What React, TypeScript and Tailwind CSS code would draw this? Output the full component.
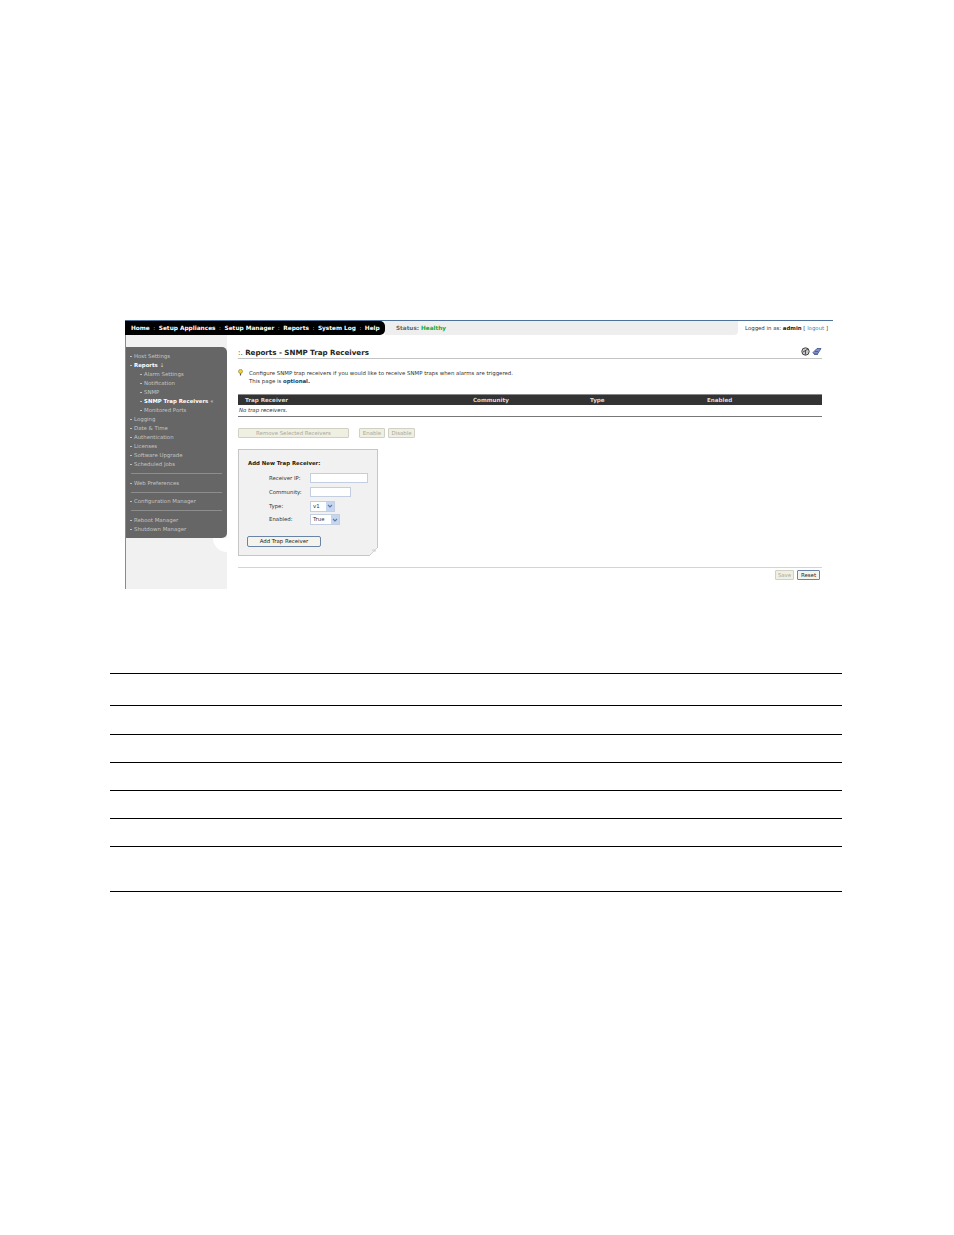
const mainNav = ["Home", "Setup Appliances", "Setup Manager", "Reports", "System Log", "Help"];

function SideItem({ label, bold, sub, arrow }: { label: string; bold?: boolean; sub?: boolean; arrow?: string }) {
  return (
    <div className={`flex h-[9px] items-center whitespace-nowrap ${sub ? "pl-[14px]" : "pl-[4px]"} ${bold ? "font-bold text-white" : "text-[#c4c4c4]"}`}>
      <span className="mr-[2px] h-[1px] w-[2px] bg-[#bdbdbd]" />
      {label}
      {arrow && <span className="ml-[2px] font-normal text-[#d8d8d8]">{arrow}</span>}
    </div>
  );
}

function Divider() {
  return <div className="mx-[5px] mb-[4.67px] mt-[4px] h-px bg-[#8d8d8d]" />;
}

function Sidebar() {
  return (
    <div className="flex w-[102px] shrink-0 flex-col border-l border-[#8a8a8a] bg-[#f1f1f1] pt-[12px]">
      <div className="relative h-[191px] rounded-r-[5px] bg-[#666666] pt-[5px] text-[5.4px] leading-[9px]">
        <SideItem label="Host Settings" />
        <SideItem label="Reports" bold arrow="↓" />
        <SideItem label="Alarm Settings" sub />
        <SideItem label="Notification" sub />
        <SideItem label="SNMP" sub />
        <SideItem label="SNMP Trap Receivers" sub bold arrow="«" />
        <SideItem label="Monitored Ports" sub />
        <SideItem label="Logging" />
        <SideItem label="Date & Time" />
        <SideItem label="Authentication" />
        <SideItem label="Licenses" />
        <SideItem label="Software Upgrade" />
        <SideItem label="Scheduled Jobs" />
        <Divider />
        <SideItem label="Web Preferences" />
        <Divider />
        <SideItem label="Configuration Manager" />
        <Divider />
        <SideItem label="Reboot Manager" />
        <SideItem label="Shutdown Manager" />
        {/* white notch under the panel corner */}
        <div className="absolute right-0 top-full h-[14px] w-[14px] rounded-bl-[14px] bg-white" />
      </div>
    </div>
  );
}

function FormRow({ label, children, h }: { label: string; children: React.ReactNode; h: string }) {
  return (
    <div className={`flex items-center ${h}`}>
      <div className="w-[71px] pl-[30px] whitespace-nowrap">{label}</div>
      {children}
    </div>
  );
}

function FakeSelect({ value, width }: { value: string; width: string }) {
  return (
    <div className={`flex h-[11px] items-center justify-between border border-[#c3cfe0] bg-white pl-[2px] ${width}`}>
      <span>{value}</span>
      <span className="flex h-[9px] w-[8px] items-center justify-center bg-[#c6d6ef]">
        <svg width="6" height="4" viewBox="0 0 6 4"><path d="M1 1l2 2 2-2" fill="none" stroke="#5b78ad" strokeWidth="1.1" /></svg>
      </span>
    </div>
  );
}

function Screen() {
  return (
    <div className="ml-[125px] flex h-[269px] w-[708px] flex-col border-t border-[#4d7198] font-['DejaVu_Sans',sans-serif] text-[5.4px] text-[#333]">
      <div className="flex h-[14px] shrink-0 items-stretch">
        <div className="flex w-[260px] items-center rounded-r-[5px] bg-black pl-[6px] pt-[1px] text-[5.8px] font-bold text-white">
          {mainNav.map((n, i) => (
            <span key={n} className="flex items-center whitespace-nowrap">
              {i > 0 && <span className="mx-[3.5px] font-normal text-[#bbb]">:</span>}
              {n}
            </span>
          ))}
        </div>
        <div className="flex w-[353px] items-center rounded-br-[4px] bg-[#eeeeee] pl-[11px] pt-[1px] text-[5.7px] font-bold text-[#666]">
          Status:&nbsp;<span className="text-[#13a83c]">Healthy</span>
        </div>
        <div className="flex flex-1 items-center justify-end whitespace-nowrap pr-[5px] pt-[1px]">
          Logged in as:&nbsp;<b className="text-[#222]">admin</b>&nbsp;[&nbsp;<span className="text-[#3b87b8]">logout</span>&nbsp;]
        </div>
      </div>
      <div className="flex min-h-0 flex-1">
        <Sidebar />
        <div className="flex w-[595px] flex-col pl-[11px]">
          <div className="flex h-[24px] shrink-0 items-end justify-between border-b border-[#c4c4c4]">
            <div className="text-[7.1px] font-bold leading-[11px] text-[#222]"><span className="font-normal">:.</span> Reports - SNMP Trap Receivers</div>
            <div className="mb-[2px] flex gap-[2px]">
              <svg width="9" height="9" viewBox="0 0 9 9"><circle cx="4.5" cy="4.5" r="3.7" fill="#c9c9c9" stroke="#444" /><path d="M2 5l5-3M4.5 3.5v4" fill="none" stroke="#333" strokeWidth=".8" /></svg>
              <svg width="10" height="9" viewBox="0 0 10 9"><path d="M1 5.5L5 1.5h4L5.5 7H2z" fill="#7d90cc" stroke="#3a4c86" strokeWidth=".8" /><path d="M2 7.5h4M3 4.5h3" stroke="#3a4c86" strokeWidth=".7" /></svg>
            </div>
          </div>
          <div className="mt-[10px] flex h-[17px] shrink-0">
            <svg width="5" height="7" viewBox="0 0 5 7"><circle cx="2.5" cy="2.4" r="2" fill="#f3d33a" stroke="#8a7a10" strokeWidth=".6" /><path d="M2.5 4.5v2" stroke="#555" strokeWidth="1.2" /></svg>
            <div className="ml-[6px] pt-[1px] leading-[7.5px] whitespace-nowrap">
              Configure SNMP trap receivers if you would like to receive SNMP traps when alarms are triggered.<br />
              This page is <b className="text-[#123f70]">optional.</b>
            </div>
          </div>
          <div className="mt-[8px] grid h-[11px] shrink-0 grid-cols-[228px_117px_117px_1fr] items-center border-t border-[#888] bg-[#333333] pl-[7px] text-[5.6px] font-bold text-[#ddd]">
            <span>Trap Receiver</span><span>Community</span><span>Type</span><span>Enabled</span>
          </div>
          <div className="flex h-[12px] shrink-0 items-center border-b border-[#777] pl-[1px] italic">No trap receivers.</div>
          <div className="mt-[11px] flex h-[10px] shrink-0 text-[#a9a9a0]">
            <div className="flex w-[111px] items-center justify-center rounded-[1px] border border-[#d0d0c4] bg-[#efefe2]">Remove Selected Receivers</div>
            <div className="ml-[10px] flex w-[26px] items-center justify-center rounded-[1px] border border-[#d0d0c4] bg-[#efefe2]">Enable</div>
            <div className="ml-[3px] flex w-[27px] items-center justify-center rounded-[1px] border border-[#d0d0c4] bg-[#efefe2]">Disable</div>
          </div>
          <div className="relative mt-[11px] h-[107px] w-[140px] shrink-0 border border-[#c6c6c6] bg-[#f1f1f1] pt-[9px]">
            <div className="h-[11px] pl-[9px] font-bold text-[#222]">Add New Trap Receiver:</div>
            <div className="mt-[1px]">
              <FormRow label="Receiver IP:" h="h-[14px]"><div className="h-[10px] w-[58px] border border-[#c3cfe0] bg-white" /></FormRow>
              <FormRow label="Community:" h="h-[14px]"><div className="h-[10px] w-[41px] border border-[#c3cfe0] bg-white" /></FormRow>
              <FormRow label="Type:" h="h-[14px]"><FakeSelect value="v1" width="w-[25px]" /></FormRow>
              <FormRow label="Enabled:" h="h-[13px]"><FakeSelect value="True" width="w-[30px]" /></FormRow>
            </div>
            <div className="ml-[8px] mt-[10px] flex h-[11px] w-[74px] items-center justify-center rounded-[2px] border border-[#6a84a8] bg-[#f4f4ec] text-[#222]">Add Trap Receiver</div>
            {/* cut corner */}
            <svg className="absolute bottom-[-1px] right-[-1px]" width="9" height="9" viewBox="0 0 9 9"><path d="M9 0v9H0z" fill="#fff" /><path d="M0 9L9 0M3 3h3M6 3v2" stroke="#c6c6c6" strokeWidth=".8" fill="none" /></svg>
          </div>
          <div className="mt-[11px] flex h-[14px] shrink-0 items-start justify-end gap-[3px] border-t border-[#d4d4d4] pr-[2px] pt-[2px]">
            <div className="flex h-[10px] w-[19px] items-center justify-center rounded-[1px] border border-[#d0d0c4] bg-[#efefe2] text-[#a9a9a0]">Save</div>
            <div className="flex h-[10px] w-[23px] items-center justify-center rounded-[1px] border border-[#6a84a8] bg-[#f4f4ec] text-[#222]">Reset</div>
          </div>
        </div>
      </div>
    </div>
  );
}

// empty table ruled below the screenshot
const rowHeights = ["h-[32px]", "h-[29px]", "h-[28px]", "h-[28px]", "h-[28px]", "h-[28px]", "h-[45px]"];

export default function App() {
  return (
    <div className="h-[1235px] w-[954px] overflow-hidden bg-white pt-[320px]">
      <Screen />
      <div className="ml-[110px] mt-[84px] w-[732px] border-t border-black">
        {rowHeights.map((h, i) => (
          <div key={i} className={`${h} border-b border-black`} />
        ))}
      </div>
    </div>
  );
}
